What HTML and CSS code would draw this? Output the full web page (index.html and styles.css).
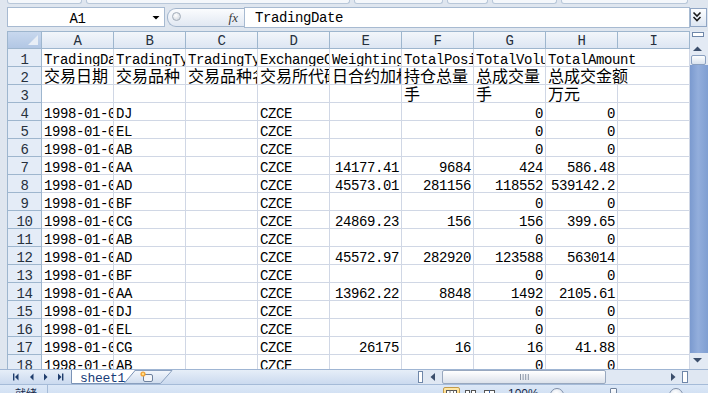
FILE: index.html
```html
<!DOCTYPE html>
<html lang="zh-CN">
<head>
<meta charset="utf-8">
<title>sheet1</title>
<link rel="stylesheet" href="styles.css">
</head>
<body>
<div class="app">
  <div class="ribbon-edge">
    <span class="rb"></span><span class="rb"></span><span class="rb"></span><span class="rb"></span><span class="rb"></span><span class="rb"></span>
  </div>

  <div class="formula-bar">
    <div class="namebox">
      <span class="nb-text">A1</span>
      <span class="nb-drop"><svg width="17" height="18" viewBox="0 0 17 18"><polygon points="5.5,8 12.5,8 9,11.5" fill="#000"/></svg></span>
    </div>
    <div class="fx-pill"><span class="grip"></span><span class="fx-label">fx</span></div>
    <div class="formula-input">TradingDate</div>
    <div class="fx-expand"><svg width="15" height="17" viewBox="0 0 15 17"><polyline points="2.5,3.5 6,7 9.5,3.5" fill="none" stroke="#1a1a1a" stroke-width="1.6"/><polyline points="2.5,8 6,11.5 9.5,8" fill="none" stroke="#1a1a1a" stroke-width="1.6"/></svg></div>
  </div>

  <div class="work">
    <div class="sheet">
      <div class="corner"><svg width="33" height="16" viewBox="0 0 33 16"><polygon points="30,3 30,13 20,13" fill="#e8eef6"/></svg></div>
      <div class="ch">A</div><div class="ch">B</div><div class="ch">C</div><div class="ch">D</div><div class="ch">E</div><div class="ch">F</div><div class="ch">G</div><div class="ch">H</div><div class="ch">I</div>

      <div class="rh">1</div><div class="c">TradingDate</div><div class="c">TradingType</div><div class="c">TradingTypeName</div><div class="c">ExchangeCode</div><div class="c">WeightingPrice</div><div class="c">TotalPosition</div><div class="c">TotalVolume</div><div class="c span2">TotalAmount</div>

      <div class="rh">2</div><div class="c z">交易日期</div><div class="c z">交易品种</div><div class="c z">交易品种名称</div><div class="c z">交易所代码</div><div class="c z">日合约加权平均价</div><div class="c z">持仓总量</div><div class="c z">总成交量</div><div class="c z span2">总成交金额</div>

      <div class="rh">3</div><div class="c"></div><div class="c"></div><div class="c"></div><div class="c"></div><div class="c"></div><div class="c z">手</div><div class="c z">手</div><div class="c z">万元</div><div class="c"></div>

      <div class="rh">4</div><div class="c">1998-01-05</div><div class="c">DJ</div><div class="c"></div><div class="c">CZCE</div><div class="c n"></div><div class="c n"></div><div class="c n">0</div><div class="c n">0</div><div class="c"></div>

      <div class="rh">5</div><div class="c">1998-01-05</div><div class="c">EL</div><div class="c"></div><div class="c">CZCE</div><div class="c n"></div><div class="c n"></div><div class="c n">0</div><div class="c n">0</div><div class="c"></div>

      <div class="rh">6</div><div class="c">1998-01-05</div><div class="c">AB</div><div class="c"></div><div class="c">CZCE</div><div class="c n"></div><div class="c n"></div><div class="c n">0</div><div class="c n">0</div><div class="c"></div>

      <div class="rh">7</div><div class="c">1998-01-05</div><div class="c">AA</div><div class="c"></div><div class="c">CZCE</div><div class="c n">14177.41</div><div class="c n">9684</div><div class="c n">424</div><div class="c n">586.48</div><div class="c"></div>

      <div class="rh">8</div><div class="c">1998-01-05</div><div class="c">AD</div><div class="c"></div><div class="c">CZCE</div><div class="c n">45573.01</div><div class="c n">281156</div><div class="c n">118552</div><div class="c n">539142.2</div><div class="c"></div>

      <div class="rh">9</div><div class="c">1998-01-05</div><div class="c">BF</div><div class="c"></div><div class="c">CZCE</div><div class="c n"></div><div class="c n"></div><div class="c n">0</div><div class="c n">0</div><div class="c"></div>

      <div class="rh">10</div><div class="c">1998-01-05</div><div class="c">CG</div><div class="c"></div><div class="c">CZCE</div><div class="c n">24869.23</div><div class="c n">156</div><div class="c n">156</div><div class="c n">399.65</div><div class="c"></div>

      <div class="rh">11</div><div class="c">1998-01-06</div><div class="c">AB</div><div class="c"></div><div class="c">CZCE</div><div class="c n"></div><div class="c n"></div><div class="c n">0</div><div class="c n">0</div><div class="c"></div>

      <div class="rh">12</div><div class="c">1998-01-06</div><div class="c">AD</div><div class="c"></div><div class="c">CZCE</div><div class="c n">45572.97</div><div class="c n">282920</div><div class="c n">123588</div><div class="c n">563014</div><div class="c"></div>

      <div class="rh">13</div><div class="c">1998-01-06</div><div class="c">BF</div><div class="c"></div><div class="c">CZCE</div><div class="c n"></div><div class="c n"></div><div class="c n">0</div><div class="c n">0</div><div class="c"></div>

      <div class="rh">14</div><div class="c">1998-01-06</div><div class="c">AA</div><div class="c"></div><div class="c">CZCE</div><div class="c n">13962.22</div><div class="c n">8848</div><div class="c n">1492</div><div class="c n">2105.61</div><div class="c"></div>

      <div class="rh">15</div><div class="c">1998-01-06</div><div class="c">DJ</div><div class="c"></div><div class="c">CZCE</div><div class="c n"></div><div class="c n"></div><div class="c n">0</div><div class="c n">0</div><div class="c"></div>

      <div class="rh">16</div><div class="c">1998-01-06</div><div class="c">EL</div><div class="c"></div><div class="c">CZCE</div><div class="c n"></div><div class="c n"></div><div class="c n">0</div><div class="c n">0</div><div class="c"></div>

      <div class="rh">17</div><div class="c">1998-01-06</div><div class="c">CG</div><div class="c"></div><div class="c">CZCE</div><div class="c n">26175</div><div class="c n">16</div><div class="c n">16</div><div class="c n">41.88</div><div class="c"></div>

      <div class="rh">18</div><div class="c">1998-01-07</div><div class="c">AB</div><div class="c"></div><div class="c">CZCE</div><div class="c n"></div><div class="c n"></div><div class="c n">0</div><div class="c n">0</div><div class="c"></div>
    </div>

    <div class="vscroll">
      <div class="vs-split"><span></span></div>
      <div class="vs-up"><svg width="9" height="5" viewBox="0 0 9 5"><polygon points="0,5 9,5 4.5,0.5" fill="#3b4e6b"/></svg></div>
      <div class="vs-thumb"></div>
      <div class="vs-track"></div>
      <div class="vs-down"><svg width="9" height="5" viewBox="0 0 9 5"><polygon points="0,0 9,0 4.5,4.5" fill="#3b4e6b"/></svg></div>
    </div>
  </div>

  <div class="tabbar">
    <div class="nav">
      <svg width="71" height="14" viewBox="0 0 71 14">
        <rect x="13" y="3.5" width="1.4" height="7" fill="#1f3d6c"/>
        <polygon points="18.5,3.5 18.5,10.5 15,7" fill="#1f3d6c"/>
        <polygon points="33.5,3.5 33.5,10.5 30,7" fill="#1f3d6c"/>
        <polygon points="44,3.5 44,10.5 47.5,7" fill="#1f3d6c"/>
        <polygon points="58,3.5 58,10.5 61.5,7" fill="#1f3d6c"/>
        <rect x="62" y="3.5" width="1.4" height="7" fill="#1f3d6c"/>
      </svg>
    </div>
    <div class="tabs">
      <svg class="tab-shapes" width="102" height="14" viewBox="0 0 102 14">
        <defs><linearGradient id="nt" x1="0" y1="0" x2="0" y2="1"><stop offset="0" stop-color="#f3f7fc"/><stop offset="1" stop-color="#cfdcee"/></linearGradient></defs>
        <polygon points="62,0.5 101,0.5 89.5,13.5 51,13.5" fill="url(#nt)" stroke="#8aa0bf"/>
        <path d="M0.5,0 V13.5 H53 L64.5,0" fill="#ffffff" stroke="#7b93b6"/>
        <rect x="72.5" y="4.5" width="9" height="7" rx="1.5" fill="#f4f6f9" stroke="#6d819f"/>
        <circle cx="72" cy="4" r="2.6" fill="#f2a43a"/>
        <circle cx="72" cy="4" r="1.2" fill="#ffe08a"/>
      </svg>
      <span class="tab-label">sheet1</span>
    </div>
    <div class="tabfill"></div>
    <div class="hscroll">
      <div class="hs-split"></div>
      <div class="hs-left"><svg width="5" height="8" viewBox="0 0 5 8"><polygon points="5,0 5,8 0.5,4" fill="#3b4e6b"/></svg></div>
      <div class="hs-thumb"><svg width="9" height="6" viewBox="0 0 9 6"><rect x="0" y="0" width="1" height="6" fill="#8b96a6"/><rect x="2.6" y="0" width="1" height="6" fill="#8b96a6"/><rect x="5.2" y="0" width="1" height="6" fill="#8b96a6"/><rect x="7.8" y="0" width="1" height="6" fill="#8b96a6"/></svg></div>
      <div class="hs-track"></div>
      <div class="hs-right"><svg width="5" height="8" viewBox="0 0 5 8"><polygon points="0,0 0,8 4.5,4" fill="#3b4e6b"/></svg></div>
      <div class="hs-split2"></div>
    </div>
    <div class="tb-corner"></div>
  </div>

  <div class="statusbar">
    <div class="st-ready">就绪</div>
    <div class="st-fill"></div>
    <div class="st-views">
      <span class="vbtn on"><svg width="11" height="9" viewBox="0 0 11 9"><rect x="0.5" y="0.5" width="10" height="8" fill="#fff" stroke="#555"/><line x1="0.5" y1="3.5" x2="10.5" y2="3.5" stroke="#777"/><line x1="4" y1="0.5" x2="4" y2="8.5" stroke="#777"/><line x1="7.5" y1="0.5" x2="7.5" y2="8.5" stroke="#777"/></svg></span>
      <span class="vbtn"><svg width="11" height="9" viewBox="0 0 11 9"><rect x="0.5" y="0.5" width="4" height="8" fill="#fff" stroke="#555"/><rect x="6.5" y="0.5" width="4" height="8" fill="#fff" stroke="#555"/></svg></span>
      <span class="vbtn"><svg width="11" height="9" viewBox="0 0 11 9"><rect x="0.5" y="0.5" width="10" height="8" fill="#fff" stroke="#555"/><line x1="5.5" y1="0.5" x2="5.5" y2="8.5" stroke="#3a66b0"/></svg></span>
    </div>
    <div class="st-zoom">100%</div>
    <div class="zbtn"><span></span></div>
    <div class="slider"><span class="slider-thumb"></span></div>
    <div class="zbtn plus"><span></span></div>
  </div>
</div>
</body>
</html>
```

FILE: styles.css
```css
* { box-sizing: border-box; margin: 0; padding: 0; }

html, body { width: 708px; height: 393px; overflow: hidden; }

body {
  background: #dfe6ef;
  font-family: "Liberation Mono", "DejaVu Sans Mono", monospace;
  font-size: 14px;
  letter-spacing: -0.4px;
  color: #000;
}

.app {
  width: 708px;
  height: 393px;
  display: flex;
  flex-direction: column;
  overflow: hidden;
}

/* remnants of the ribbon above */
.ribbon-edge {
  height: 7px;
  flex: none;
  display: grid;
  grid-template-columns: 75px 264px 89px 41px 65px 127px;
  column-gap: 4px;
  padding-left: 7px;
  align-items: start;
}
.rb {
  height: 4px;
  background: #f4f7fb;
  border: 1px solid #b8c7d9;
  border-top: none;
  border-radius: 0 0 3px 3px;
}

/* formula bar */
.formula-bar {
  height: 21px;
  flex: none;
  margin-bottom: 3px;
  display: flex;
  align-items: flex-start;
  padding-left: 7px;
}
.namebox {
  width: 158px;
  height: 20px;
  margin-right: 2px;
  background: #fff;
  border: 1px solid #a7bad1;
  display: flex;
}
.nb-text {
  flex: 1;
  text-align: center;
  padding-top: 4px;
  line-height: 14px;
}
.nb-drop { width: 17px; display: flex; }
.fx-pill {
  width: 77px;
  height: 19px;
  margin-top: 1px;
  border: 1px solid #a2b5cc;
  border-right: none;
  border-radius: 9px 0 0 9px;
  background: linear-gradient(#fbfcfe, #e1e8f2);
  display: flex;
  align-items: flex-start;
}
.grip {
  width: 9px;
  height: 9px;
  margin: 3px 0 0 4px;
  border-radius: 50%;
  border: 1px solid #a3adb9;
  background: radial-gradient(circle at 40% 35%, #ffffff, #c9d1db);
}
.fx-label {
  margin-left: auto;
  margin-right: 6px;
  padding-top: 2px;
  font-family: "Liberation Serif", serif;
  font-style: italic;
  font-size: 13px;
  line-height: 13px;
  letter-spacing: 0;
  color: #3a3a3a;
}
.formula-input {
  flex: 1;
  height: 21px;
  background: #fff;
  border: 1px solid #a7bad1;
  padding: 3px 0 0 10px;
  line-height: 14px;
  white-space: nowrap;
}
.fx-expand {
  width: 17px;
  height: 19px;
  margin: 1px 1px 0 0;
  border: 1px solid #8fa5c4;
  background: linear-gradient(#fdfeff, #dde6f2);
  display: flex;
}

/* worksheet */
.work {
  height: 338px;
  flex: none;
  display: flex;
  padding-left: 7px;
}
.sheet {
  width: 683px;
  height: 338px;
  overflow: hidden;
  display: grid;
  grid-template-columns: 34px repeat(9, 72px);
  grid-auto-rows: 18px;
  align-content: start;
  border-left: 1px solid #9eb6ce;
  background: #fff;
}
.corner {
  background: linear-gradient(#c8d8ee, #b2c7e4);
  border-top: 1px solid #9eb6ce;
  border-right: 1px solid #9eb6ce;
  border-bottom: 1px solid #9eb6ce;
}
.corner svg { display: block; }
.ch {
  background: linear-gradient(#f2f6fb, #dde6f3);
  border-top: 1px solid #9eb6ce;
  border-right: 1px solid #9eb6ce;
  border-bottom: 1px solid #9eb6ce;
  text-align: center;
  padding-top: 2px;
  line-height: 14px;
  color: #26303d;
}
.rh {
  background: #e4ecf7;
  border-right: 1px solid #9eb6ce;
  border-bottom: 1px solid #9eb6ce;
  text-align: center;
  padding-top: 4px;
  line-height: 14px;
  color: #26303d;
}
.c {
  border-right: 1px solid #d0d7e5;
  border-bottom: 1px solid #d0d7e5;
  padding: 4px 2px 0;
  line-height: 14px;
  white-space: nowrap;
  overflow: hidden;
}
.n { text-align: right; }
.z {
  font-family: "Noto Sans CJK SC", sans-serif;
  font-size: 16px;
  line-height: 16px;
  letter-spacing: 0;
  padding-top: 0;
}
.span2 { grid-column: span 2; }

/* vertical scrollbar */
.vscroll {
  width: 18px;
  height: 338px;
  display: flex;
  flex-direction: column;
  background: #e3eaf4;
}
.vs-split { height: 7px; flex: none; padding: 1px 0 0 2px; }
.vs-split span {
  display: block;
  width: 12px;
  height: 5px;
  background: #fff;
  border: 1px solid #6f87a9;
}
.vs-up {
  height: 17px;
  flex: none;
  display: flex;
  justify-content: center;
  padding: 8px 3px 0 0;
}
.vs-thumb {
  height: 10px;
  flex: none;
  margin: 0 2px 0 1px;
  border: 1px solid #8aa0c0;
  border-radius: 2px;
  background: linear-gradient(#fdfeff, #d9e2ee);
}
.vs-track {
  flex: 1;
  background: linear-gradient(to right, #7b9acf, #93aedc 45%, #809fd2);
}
.vs-down {
  height: 16px;
  flex: none;
  display: flex;
  justify-content: center;
  padding: 5px 3px 0 0;
}
.vs-up svg, .vs-down svg { display: block; }

/* sheet tab bar */
.tabbar {
  height: 15px;
  flex: none;
  display: flex;
  background: linear-gradient(#e6eef8, #cbdaef);
  border-top: 1px solid #9fb5d3;
}
.nav { width: 71px; flex: none; }
.nav svg { display: block; }
.tabs {
  width: 102px;
  flex: none;
  position: relative;
}
.tab-shapes { position: absolute; left: 0; top: 0; }
.tab-label {
  position: relative;
  display: block;
  padding: 2px 0 0 9px;
  font-size: 13px;
  line-height: 13px;
  letter-spacing: -0.3px;
  color: #183c78;
}
.tabfill { flex: 1; }
.hscroll {
  width: 272px;
  flex: none;
  display: flex;
  align-items: flex-start;
  background: #e0e8f3;
}
.hs-split, .hs-split2 {
  height: 12px;
  margin-top: 1px;
  background: #fff;
  border: 1px solid #6f87a9;
}
.hs-split { width: 5px; }
.hs-split2 { width: 6px; margin: 1px 2px 0 1px; }
.hs-left, .hs-right {
  height: 14px;
  display: flex;
  align-items: center;
  justify-content: center;
}
.hs-left { width: 19px; }
.hs-right { width: 16px; }
.hs-thumb {
  width: 164px;
  height: 14px;
  border: 1px solid #98a8bf;
  border-radius: 2px;
  background: linear-gradient(#ffffff, #dce2eb);
  display: flex;
  align-items: center;
  justify-content: center;
}
.hs-thumb svg { display: block; }
.hs-track { flex: 1; height: 14px; }
.tb-corner { width: 18px; flex: none; background: #dfe7f2; }

/* status bar */
.statusbar {
  height: 22px;
  flex: none;
  display: flex;
  align-items: flex-start;
  background: linear-gradient(#dce8f7, #c4d6ee);
  border-top: 1px solid #a5bbd8;
}
.st-ready {
  width: 48px;
  height: 21px;
  padding: 1px 0 0 15px;
  border-right: 1px solid #a5bbd8;
  font-family: "Noto Sans CJK SC", sans-serif;
  font-size: 11px;
  line-height: 14px;
  letter-spacing: 0;
  color: #15294a;
}
.st-fill { flex: 1; }
.st-views {
  width: 55px;
  margin-right: 10px;
  margin-top: 2px;
  display: flex;
  gap: 2px;
}
.vbtn {
  width: 17px;
  height: 16px;
  display: flex;
  justify-content: center;
  padding-top: 3px;
}
.vbtn.on {
  background: linear-gradient(#ffe9a8, #ffc55a);
  border: 1px solid #c29b4a;
  border-radius: 2px;
  padding-top: 2px;
}
.vbtn svg { display: block; }
.st-zoom {
  width: 32px;
  margin-right: 10px;
  padding-top: 2px;
  font-family: "Liberation Sans", sans-serif;
  font-size: 12px;
  line-height: 14px;
  letter-spacing: 0;
  color: #15294a;
}
.zbtn {
  width: 14px;
  height: 14px;
  margin-top: 3px;
  border-radius: 50%;
  border: 1px solid #7f90aa;
  background: radial-gradient(circle at 45% 35%, #ffffff, #ccd7e6);
  display: flex;
  align-items: center;
  justify-content: center;
}
.zbtn span { width: 6px; height: 2px; background: #2e4468; }
.zbtn.plus span { box-shadow: none; position: relative; }
.zbtn.plus { margin-right: 25px; }
.slider {
  width: 102px;
  height: 14px;
  margin: 3px 1px 0 2px;
  display: flex;
}
.slider-thumb {
  width: 7px;
  height: 11px;
  margin-left: 44px;
  border: 1px solid #6f819c;
  background: linear-gradient(#ffffff, #d5dde8);
  border-radius: 1px;
}
```
